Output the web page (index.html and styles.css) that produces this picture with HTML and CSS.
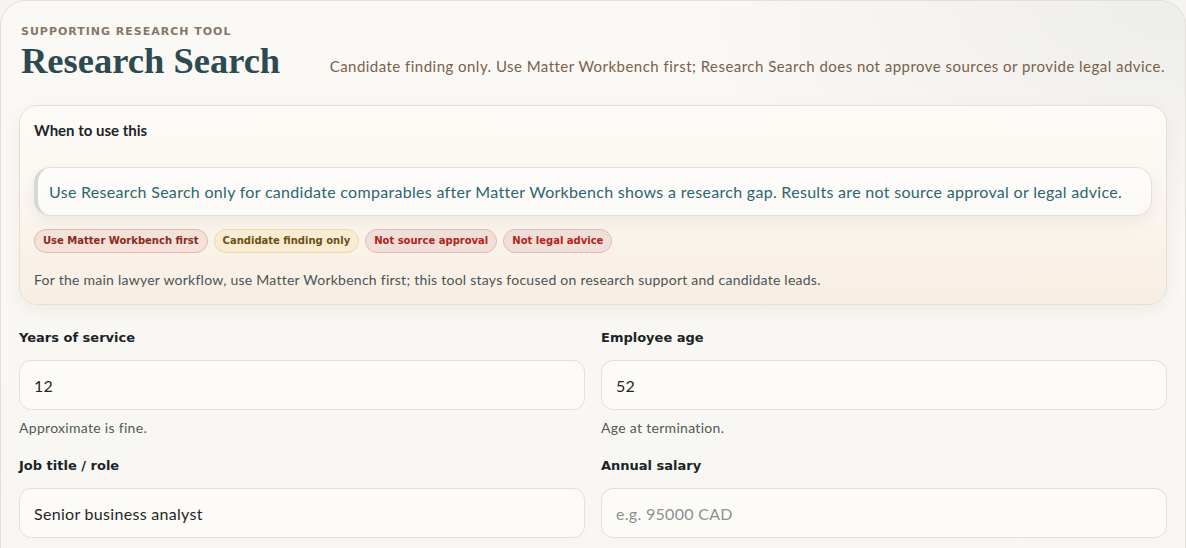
FILE: index.html
```html
<!DOCTYPE html>
<html lang="en">
<head>
<meta charset="utf-8">
<title>Research Search</title>
<link rel="stylesheet" href="styles.css">
</head>
<body>
<main class="panel">
  <header class="head">
    <div class="head-left">
      <div class="eyebrow">SUPPORTING RESEARCH TOOL</div>
      <h1 class="title">Research Search</h1>
    </div>
    <p class="subtitle">Candidate finding only. Use Matter Workbench first; Research Search does not approve sources or provide legal advice.</p>
  </header>

  <section class="guide">
    <h2 class="guide-title">When to use this</h2>
    <div class="callout">Use Research Search only for candidate comparables after Matter Workbench shows a research gap. Results are not source approval or legal advice.</div>
    <div class="badges">
      <span class="badge badge-rust">Use Matter Workbench first</span>
      <span class="badge badge-amber">Candidate finding only</span>
      <span class="badge badge-red">Not source approval</span>
      <span class="badge badge-red">Not legal advice</span>
    </div>
    <p class="guide-note">For the main lawyer workflow, use Matter Workbench first; this tool stays focused on research support and candidate leads.</p>
  </section>

  <form class="form">
    <div class="field">
      <label class="label" for="years">Years of service</label>
      <input class="input" id="years" type="text" value="12">
      <div class="help">Approximate is fine.</div>
    </div>
    <div class="field">
      <label class="label" for="age">Employee age</label>
      <input class="input" id="age" type="text" value="52">
      <div class="help">Age at termination.</div>
    </div>
    <div class="field">
      <label class="label" for="job">Job title / role</label>
      <input class="input" id="job" type="text" value="Senior business analyst">
    </div>
    <div class="field">
      <label class="label" for="salary">Annual salary</label>
      <input class="input" id="salary" type="text" placeholder="e.g. 95000 CAD">
    </div>
  </form>
</main>
</body>
</html>
```

FILE: styles.css
```css
* { box-sizing: border-box; }

html, body {
  margin: 0;
  padding: 0;
  background: #f6f4f0;
  font-family: "Lato", "Noto Sans", sans-serif;
  overflow: hidden;
}

.panel {
  width: 1186px;
  min-height: 600px;
  border: 1px solid #e4e0d9;
  border-radius: 26px;
  padding: 24px 18px 0 18px;
  background:
    radial-gradient(ellipse 520px 260px at 100% 0%, rgba(236, 236, 233, 0.9), rgba(236, 236, 233, 0) 100%),
    linear-gradient(180deg, #fbf9f5 0%, #f8f6f2 100%);
}

.head {
  display: flex;
  justify-content: space-between;
  align-items: flex-end;
  padding: 0 2px 0 2px;
}

.eyebrow {
  font-family: "DejaVu Sans", "Lato", sans-serif;
  font-size: 11px;
  line-height: 14px;
  font-weight: 700;
  letter-spacing: 0.09em;
  color: #8a7565;
}

.title {
  margin: 2px 0 0 0;
  font-family: "Liberation Serif", "Times New Roman", serif;
  font-size: 36.5px;
  line-height: 40px;
  font-weight: 700;
  color: #2c4a50;
}

.subtitle {
  margin: 0 0 5px 0;
  font-size: 15px;
  line-height: 20px;
  letter-spacing: 0.47px;
  color: #7a5f4c;
}

.guide {
  margin-top: 24px;
  border: 1px solid #e8dfd3;
  border-radius: 18px;
  padding: 14px 14px 15px 14px;
  background: linear-gradient(180deg, #fdfbf7 0%, #faf5ee 55%, #f8eee3 100%);
  box-shadow: 0 6px 18px rgba(120, 100, 80, 0.08);
}

.guide-title {
  margin: 0;
  font-size: 15px;
  line-height: 20px;
  font-weight: 700;
  color: #1b2629;
}

.callout {
  margin-top: 27px;
  padding: 14px 14px 13px 11px;
  border: 1px solid #e3e0db;
  border-left: 4px solid #d5d8d5;
  border-radius: 16px;
  background: linear-gradient(180deg, #fefdfb 0%, #fbf9f5 100%);
  box-shadow: 0 6px 14px rgba(110, 100, 90, 0.08);
  font-size: 16px;
  line-height: 20px;
  letter-spacing: 0.3px;
  color: #2c6670;
}

.badges {
  display: flex;
  gap: 6px;
  margin-top: 13px;
}

.badge {
  display: inline-block;
  padding: 3px 8px;
  border-radius: 999px;
  border: 1px solid;
  font-family: "DejaVu Sans", "Lato", sans-serif;
  font-size: 10px;
  line-height: 16px;
  font-weight: 700;
}

.badge-rust {
  background: #f4e1da;
  border-color: #e5b7aa;
  color: #862c1c;
}

.badge-amber {
  background: #f8edd2;
  border-color: #eddaa8;
  color: #6c4f17;
}

.badge-red {
  background: #f0dfd9;
  border-color: #e2bcb3;
  color: #b0231a;
}

.guide-note {
  margin: 18px 0 0 0;
  font-size: 14px;
  line-height: 18px;
  letter-spacing: 0.25px;
  color: #4a5456;
}

.form {
  display: grid;
  grid-template-columns: 1fr 1fr;
  column-gap: 16px;
  row-gap: 20px;
  margin-top: 24px;
}

.field {
  display: flex;
  flex-direction: column;
}

.label {
  font-family: "DejaVu Sans", "Lato", sans-serif;
  font-size: 13px;
  line-height: 18px;
  font-weight: 700;
  color: #1a2427;
}

.input {
  margin-top: 13px;
  height: 50px;
  border: 1px solid #e4e0da;
  border-radius: 12px;
  background: #fdfbf8;
  padding: 0 14px;
  font-family: "Lato", "Noto Sans", sans-serif;
  font-size: 16px;
  letter-spacing: 0.3px;
  color: #1f2628;
  outline: none;
}

.input::placeholder {
  color: #8b9091;
}

.help {
  margin-top: 9px;
  font-size: 14px;
  line-height: 18px;
  letter-spacing: 0.3px;
  color: #505a5c;
}
```
